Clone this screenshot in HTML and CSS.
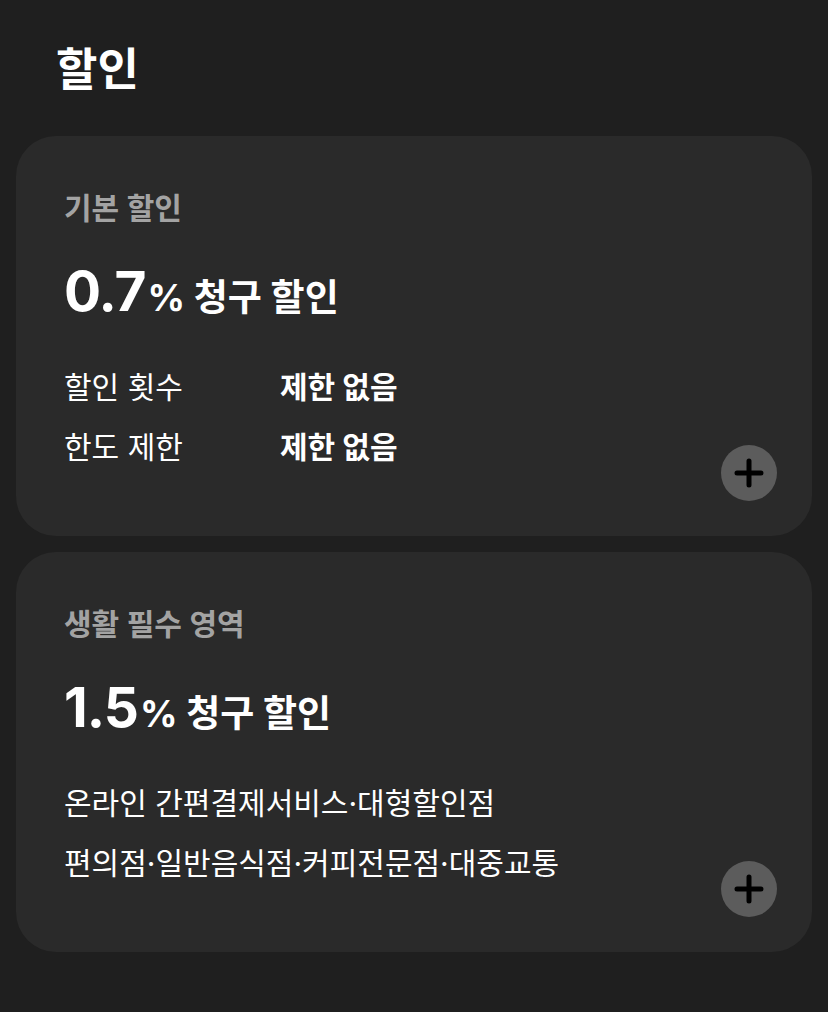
FILE: index.html
```html
<!DOCTYPE html>
<html lang="ko">
<head>
    <meta charset="UTF-8">
    <meta name="viewport" content="width=device-width, initial-scale=1.0">
    <title>할인</title>
    <link rel="stylesheet" href="styles.css">
</head>
<body>
    <div class="page">
        <h1 class="title">할인</h1>

        <div class="card">
            <div class="label">기본 할인</div>
            <div class="rate"><span class="num">0.7</span><span class="pct">%</span> 청구 할인</div>
            <div class="rows">
                <div class="row"><span class="key">할인 횟수</span><span class="val">제한 없음</span></div>
                <div class="row"><span class="key">한도 제한</span><span class="val">제한 없음</span></div>
            </div>
            <button class="plus" type="button" aria-label="더보기">
                <svg width="30" height="30" viewBox="0 0 30 30"><path d="M15 3v24M3 15h24" stroke="#000" stroke-width="5" stroke-linecap="round"/></svg>
            </button>
        </div>

        <div class="card">
            <div class="label">생활 필수 영역</div>
            <div class="rate"><span class="num">1.5</span><span class="pct">%</span> 청구 할인</div>
            <div class="rows">
                <div class="row">온라인 간편결제서비스·대형할인점</div>
                <div class="row">편의점·일반음식점·커피전문점·대중교통</div>
            </div>
            <button class="plus" type="button" aria-label="더보기">
                <svg width="30" height="30" viewBox="0 0 30 30"><path d="M15 3v24M3 15h24" stroke="#000" stroke-width="5" stroke-linecap="round"/></svg>
            </button>
        </div>
    </div>
</body>
</html>
```

FILE: styles.css
```css
body {
    margin: 0;
    background-color: #1f1f1f;
    color: #fff;
    font-family: Inter, "Noto Sans CJK KR", sans-serif;
}
.page {
    padding: 38px 16px 0;
}
.title {
    margin: 0 0 34px 40px;
    font-size: 45px;
    line-height: 64px;
    font-weight: 700;
}
.card {
    position: relative;
    height: 400px;
    box-sizing: border-box;
    margin-bottom: 16px;
    padding: 52px 48px 0;
    background-color: #2a2a2a;
    border-radius: 40px;
}
.label {
    font-size: 30px;
    line-height: 40px;
    font-weight: 600;
    color: #a3a3a3;
}
.rate {
    margin-top: 35px;
    font-size: 37px;
    line-height: 56px;
    font-weight: 700;
}
.rate .num {
    font-size: 55px;
    letter-spacing: -1px;
}
.rate .pct {
    margin-left: 2px;
}
.rows {
    margin-top: 31px;
}
.row {
    display: flex;
    font-size: 30px;
    line-height: 60px;
}
.key {
    width: 216px;
}
.val {
    font-weight: 700;
}
.plus {
    position: absolute;
    right: 35px;
    bottom: 35px;
    width: 56px;
    height: 56px;
    padding: 0;
    border: none;
    border-radius: 50%;
    background-color: #5c5c5c;
    display: flex;
    align-items: center;
    justify-content: center;
}
```
